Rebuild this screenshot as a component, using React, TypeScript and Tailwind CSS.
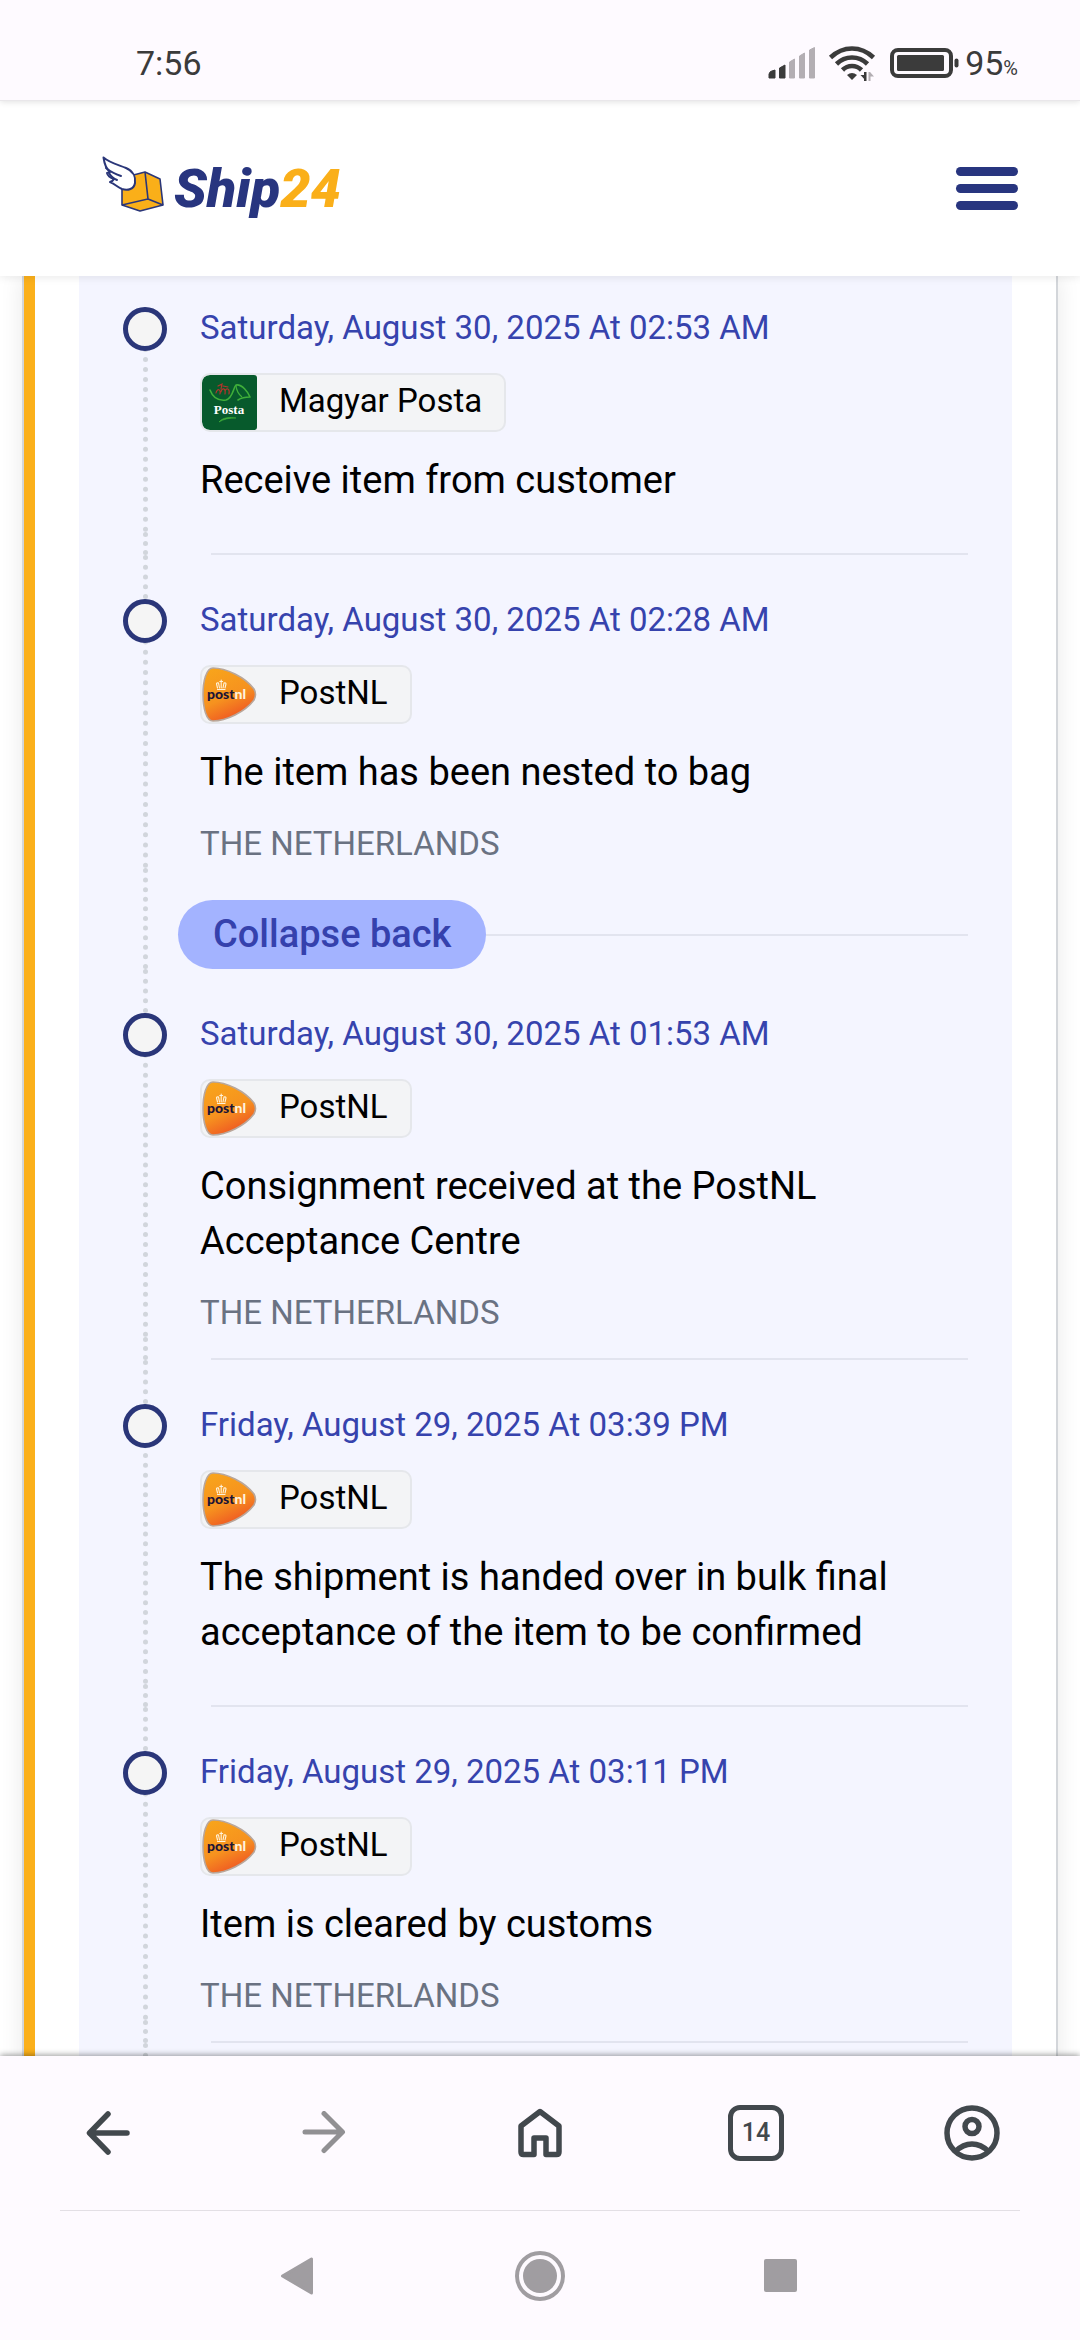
import type { ReactNode } from "react";

type Carrier = "posta" | "postnl";

interface TrackingEvent {
  date: string;
  carrier: Carrier;
  title: string;
  location?: string;
  collapse?: boolean;
}

const EVENTS: TrackingEvent[] = [
  { date: "Saturday, August 30, 2025 At 02:53 AM", carrier: "posta", title: "Receive item from customer" },
  {
    date: "Saturday, August 30, 2025 At 02:28 AM",
    carrier: "postnl",
    title: "The item has been nested to bag",
    location: "THE NETHERLANDS",
    collapse: true,
  },
  {
    date: "Saturday, August 30, 2025 At 01:53 AM",
    carrier: "postnl",
    title: "Consignment received at the PostNL Acceptance Centre",
    location: "THE NETHERLANDS",
  },
  {
    date: "Friday, August 29, 2025 At 03:39 PM",
    carrier: "postnl",
    title: "The shipment is handed over in bulk final acceptance of the item to be confirmed",
  },
  {
    date: "Friday, August 29, 2025 At 03:11 PM",
    carrier: "postnl",
    title: "Item is cleared by customs",
    location: "THE NETHERLANDS",
  },
];

function PostaLogo() {
  return (
    <svg viewBox="0 0 55 55" className="h-[55px] w-[55px] shrink-0" aria-hidden="true">
      <path d="M8 0H52Q55 0 55 3V52Q55 55 52 55H8Q0 55 0 47V8Q0 0 8 0Z" fill="#075a2c" />
      <path
        d="M8 15C11 23 17 26 24 25C31 23 31 13 34 10C40 9 46 17 48 22C44 22 39 23 36 25"
        fill="none"
        stroke="#3fae3a"
        strokeWidth="1.6"
        strokeLinecap="round"
        strokeLinejoin="round"
      />
      <path d="M34 10C34 15 37 20 40 22" fill="none" stroke="#3fae3a" strokeWidth="1.2" />
      <path
        d="M14 18C15 13 19 14 18 19M19 17C20 12 24 13 23 19M23 16C25 12 28 14 27 19M16 11L20 9L19 14M21 11L26 12"
        fill="none"
        stroke="#b5342c"
        strokeWidth="1.2"
        strokeLinecap="round"
      />
      <text x="27" y="39" textAnchor="middle" fill="#fff" fontSize="13" fontWeight="700" fontFamily="'Liberation Serif', serif">
        Posta
      </text>
      <path d="M17 47C21 42 28 42 34 43C27 43 22 44 17 47Z" fill="#3fae3a" stroke="#3fae3a" strokeWidth="0.6" />
    </svg>
  );
}

function PostNLLogo() {
  return (
    <svg viewBox="0 0 55 55" className="h-[55px] w-[55px] shrink-0" aria-hidden="true">
      <defs>
        <linearGradient id="postnl-fill" x1="0.2" y1="0" x2="0.65" y2="1">
          <stop offset="0" stopColor="#f8a41b" />
          <stop offset="0.55" stopColor="#f6921f" />
          <stop offset="1" stopColor="#ee4f23" />
        </linearGradient>
      </defs>
      <path
        d="M11 1C24 1 43 10 52 22Q55 27.500 52 33C43 45 24 54 11 54C4 54 1 40 1 27.500C1 15 4 1 11 1Z"
        fill="url(#postnl-fill)"
        stroke="#b9a79b"
        strokeWidth="1.6"
      />
      <g fill="none" stroke="#fff3dc" strokeWidth="1.1" strokeLinecap="round">
        <path d="M15.500 21L14.500 17Q14.500 15.500 16.500 16L17.500 21M23 21L24 17Q24 15.500 22 16L21 21M19.200 21V13M17.800 14.500H20.600" />
        <path d="M15.500 22.500H23" />
      </g>
      <text x="5" y="32" fontSize="14" fontWeight="900" fontFamily="Lato, sans-serif">
        <tspan fill="#1c1436">post</tspan>
        <tspan fill="#fff3dc">nl</tspan>
      </text>
    </svg>
  );
}

function CarrierBadge({ carrier }: { carrier: Carrier }) {
  return (
    <div className="mt-6 flex h-[59px] w-fit overflow-hidden rounded-[10px] border-2 border-gray-200 bg-gray-100">
      {carrier === "posta" ? <PostaLogo /> : <PostNLLogo />}
      <span className="px-[22px] text-[33px] leading-[52px] text-black">
        {carrier === "posta" ? "Magyar Posta" : "PostNL"}
      </span>
    </div>
  );
}

const RAIL = "border-l-[5px] border-dotted border-gray-300";

function EventItem({ event }: { event: TrackingEvent }) {
  return (
    <li>
      <div className={`${RAIL} relative pl-[52px]`}>
        <span className="absolute top-0 -left-[25px] size-11 rounded-full border-[5px] border-[#2a3679] bg-[#f5f5f5]" />
        <time className="block text-[33px] leading-[42px] text-[#3643ad]">{event.date}</time>
        <CarrierBadge carrier={event.carrier} />
        <p className="mt-[21px] text-[38px] leading-[55px] text-black">{event.title}</p>
        {event.location ? (
          <p className="mt-[19px] text-[33px] leading-[49px] text-gray-500">{event.location}</p>
        ) : (
          <div className="h-6" />
        )}
      </div>
      {event.collapse ? (
        <div className={`${RAIL} flex items-center pt-8 pl-[30px]`}>
          <button
            type="button"
            className="h-[69px] shrink-0 rounded-full bg-indigo-300 px-[35px] text-[38px] leading-[67px] font-medium text-[#3541ad]"
          >
            Collapse back
          </button>
          <div className="h-0.5 flex-1 bg-[#e2e4ef]" />
        </div>
      ) : (
        <div className={`${RAIL} flex h-[23px] items-end pl-[63px]`}>
          <div className="h-0.5 flex-1 bg-[#e2e4ef]" />
        </div>
      )}
      <div className={`${RAIL} h-11`} />
    </li>
  );
}

function StatusBar() {
  return (
    <div className="relative z-20 flex h-[101px] shrink-0 items-center justify-between border-b border-[#e9e7ea] bg-[#fefaff] pt-[25px] pr-[62px] pl-[136px] text-[#3b3b3b] shadow-[0_1px_6px_rgba(0,0,0,0.12)]">
      <span className="text-[34px] leading-10">7:56</span>
      <div className="flex items-center">
        <svg viewBox="0 0 48 32" className="h-8 w-12" aria-hidden="true">
          <path d="M1 31V27Q1 24 7 23V31Z" fill="#3b3b3b" stroke="#3b3b3b" strokeLinejoin="round" />
          <path d="M11.500 21L17 18V31H11.500Z" fill="#3b3b3b" stroke="#3b3b3b" strokeLinejoin="round" />
          <path
            d="M21.500 15L26.500 12V31H21.500ZM31.500 9L36.500 6V31H31.500ZM41.500 3L46.500 0.500V31H41.500Z"
            fill="#b3aeb3"
            stroke="#b3aeb3"
            strokeLinejoin="round"
          />
        </svg>
        <svg viewBox="0 0 48 36" className="ml-3 h-9 w-12" aria-hidden="true">
          <g fill="none" stroke="#3b3b3b" strokeWidth="4.600">
            <path d="M2.500 12.500Q12 3.500 24 3.500T45.500 12.500" />
            <path d="M8.500 19Q15 12.500 24 12.500T39.500 19" />
            <path d="M14.500 25Q18.500 21 24 21T33.500 25" />
          </g>
          <path d="M19 30Q24 26 29 30L24 35Z" fill="#3b3b3b" />
          <path d="M36 27H38.500V36H36ZM32.500 30H36L38 36Z" fill="#3b3b3b" />
          <path d="M40.500 27H42.500V36H40.500ZM42 27L46 31.500H42Z" fill="#b3aeb3" />
        </svg>
        <svg viewBox="0 0 70 30" className="ml-[14px] h-[30px] w-[70px]" aria-hidden="true">
          <rect x="2" y="2" width="59" height="26" rx="6" fill="none" stroke="#3b3b3b" strokeWidth="4" />
          <rect x="7" y="7" width="47" height="16" rx="1.500" fill="#3b3b3b" />
          <rect x="64.500" y="10.500" width="4" height="9" rx="2" fill="#3b3b3b" />
        </svg>
        <span className="ml-[5px] text-[34px] leading-10">
          95<span className="text-[20px] leading-none">%</span>
        </span>
      </div>
    </div>
  );
}

function SiteHeader() {
  return (
    <header className="relative z-10 flex h-[175px] shrink-0 items-center justify-between bg-white pr-[62px] pl-[102px] shadow-[0_2px_8px_rgba(0,0,0,0.08)]">
      <a href="#home" aria-label="Ship24" className="flex items-center text-[54px] leading-[64px] font-black italic">
        <svg viewBox="0 0 64 58" className="mr-[8px] mb-[10px] h-[58px] w-16" aria-hidden="true">
          <path
            d="M20 23L43 17L58 24L61 50L38 56L20 50Z"
            fill="#faaf19"
            stroke="#2a3679"
            strokeWidth="1.6"
            strokeLinejoin="round"
          />
          <path d="M43 17L46 44L20 50M46 44L61 50" fill="none" stroke="#2a3679" strokeWidth="1.6" />
          <path
            d="M1.500 2.500C8 8 17 10 24 13C31 16 34 22 33 28C32 34 26 36 20 34C15 32 13 29 8 27Q11 26 12 24Q6 22 5 18L8 17Q3 13 1.500 2.500Z"
            fill="#fff"
            stroke="#2a3679"
            strokeWidth="2"
            strokeLinejoin="round"
          />
          <path d="M4 13Q10 18 19 21M7 18Q10 23 15 25" fill="none" stroke="#2a3679" strokeWidth="2" strokeLinecap="round" />
        </svg>
        <span className="text-[#28357f]">Ship</span>
        <span className="text-[#faaf19]">24</span>
      </a>
      <button type="button" aria-label="Open menu" className="flex w-[62px] flex-col gap-2">
        <span className="h-[9px] rounded-full bg-[#28357f]" />
        <span className="h-[9px] rounded-full bg-[#28357f]" />
        <span className="h-[9px] rounded-full bg-[#28357f]" />
      </button>
    </header>
  );
}

function ToolButton({ label, children }: { label: string; children: ReactNode }) {
  return (
    <button type="button" aria-label={label} className="flex items-center justify-center">
      {children}
    </button>
  );
}

function BrowserBar() {
  return (
    <nav className="relative z-10 shrink-0 bg-[#fefaff] shadow-[0_-1px_6px_rgba(0,0,0,0.4)]">
      <div className="grid h-[154px] grid-cols-5">
        <ToolButton label="Back">
          <svg viewBox="0 0 44 44" className="size-11" fill="none" stroke="#42484d" strokeWidth="5.500" strokeLinecap="round" strokeLinejoin="round">
            <path d="M22 3L3.500 22L22 41M4 22H41" />
          </svg>
        </ToolButton>
        <ToolButton label="Forward">
          <svg viewBox="0 0 44 44" className="size-11" fill="none" stroke="#919093" strokeWidth="5" strokeLinecap="round" strokeLinejoin="round">
            <path d="M22 2.500L40.500 21L22 39.500M40 21H3" />
          </svg>
        </ToolButton>
        <ToolButton label="Home">
          <svg viewBox="0 0 44 50" className="h-[50px] w-11" fill="none" stroke="#42484d" strokeWidth="5.500" strokeLinejoin="round">
            <path d="M22 3.500L3 18V44Q3 46.500 5.500 46.500H16V30H28V46.500H38.500Q41 46.500 41 44V18Z" />
          </svg>
        </ToolButton>
        <ToolButton label="Tabs">
          <span className="flex size-14 items-center justify-center rounded-[12px] border-[5px] border-[#42484d] text-[25px] font-medium text-[#42484d]">
            14
          </span>
        </ToolButton>
        <ToolButton label="Profile">
          <svg viewBox="0 0 56 56" className="size-14" fill="none" stroke="#42484d" strokeWidth="5.500">
            <circle cx="28" cy="28" r="25" />
            <circle cx="28" cy="21.500" r="7" />
            <path d="M11.500 46.500Q19 39 28 39T44.500 46.500" />
          </svg>
        </ToolButton>
      </div>
      <div className="mx-[60px] h-px bg-[#e3dfe5]" />
      <div className="flex h-[129px] justify-center">
        <button type="button" aria-label="System back" className="flex w-2/9 items-center justify-center">
          <svg viewBox="0 0 40 40" className="size-10" fill="#a09da1" stroke="#a09da1" strokeWidth="3" strokeLinejoin="round">
            <path d="M2.500 20L31.500 3V37Z" />
          </svg>
        </button>
        <button type="button" aria-label="System home" className="flex w-2/9 items-center justify-center">
          <svg viewBox="0 0 50 50" className="size-[50px]">
            <circle cx="25" cy="25" r="23" fill="none" stroke="#a09da1" strokeWidth="4" />
            <circle cx="25" cy="25" r="17" fill="#a09da1" />
          </svg>
        </button>
        <button type="button" aria-label="Recent apps" className="flex w-2/9 items-center justify-center">
          <span className="size-[33px] rounded-[2px] bg-[#a09da1]" />
        </button>
      </div>
    </nav>
  );
}

export default function App() {
  return (
    <div className="flex h-dvh flex-col overflow-hidden bg-white font-[Roboto,sans-serif]">
      <StatusBar />
      <SiteHeader />
      <main className="min-h-0 flex-1 overflow-y-auto px-[22px] [scrollbar-width:none]">
        <div className="border-x-2 border-[#d3d6da] shadow-[0_0_22px_rgba(0,0,0,0.09)]">
          <div className="border-l-[11px] border-[#fbb01b] bg-white pr-11 pl-11">
            <ol className="bg-[#f4f5ff] pt-[31px] pr-11 pl-16">
              {EVENTS.map((event) => (
                <EventItem key={event.date} event={event} />
              ))}
            </ol>
          </div>
        </div>
      </main>
      <BrowserBar />
    </div>
  );
}
